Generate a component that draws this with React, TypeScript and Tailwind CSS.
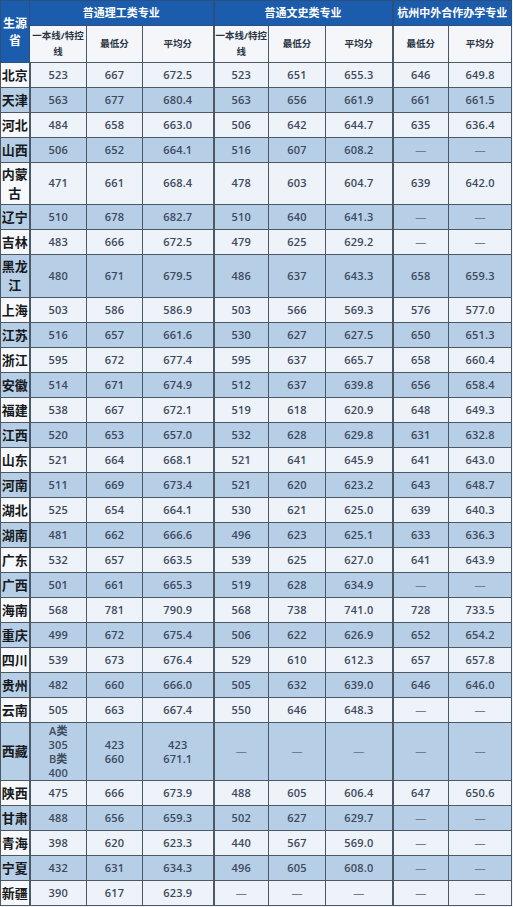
import React from "react";

type Row = { p: string[]; c: (string | string[])[]; h?: string };

const D = "—";

const rows: Row[] = [
  { p: ["北京"], c: ["523", "667", "672.5", "523", "651", "655.3", "646", "649.8"] },
  { p: ["天津"], c: ["563", "677", "680.4", "563", "656", "661.9", "661", "661.5"] },
  { p: ["河北"], c: ["484", "658", "663.0", "506", "642", "644.7", "635", "636.4"] },
  { p: ["山西"], c: ["506", "652", "664.1", "516", "607", "608.2", D, D] },
  { p: ["内蒙", "古"], c: ["471", "661", "668.4", "478", "603", "604.7", "639", "642.0"], h: "h-[42px]" },
  { p: ["辽宁"], c: ["510", "678", "682.7", "510", "640", "641.3", D, D] },
  { p: ["吉林"], c: ["483", "666", "672.5", "479", "625", "629.2", D, D] },
  { p: ["黑龙", "江"], c: ["480", "671", "679.5", "486", "637", "643.3", "658", "659.3"], h: "h-[43px]" },
  { p: ["上海"], c: ["503", "586", "586.9", "503", "566", "569.3", "576", "577.0"] },
  { p: ["江苏"], c: ["516", "657", "661.6", "530", "627", "627.5", "650", "651.3"] },
  { p: ["浙江"], c: ["595", "672", "677.4", "595", "637", "665.7", "658", "660.4"] },
  { p: ["安徽"], c: ["514", "671", "674.9", "512", "637", "639.8", "656", "658.4"] },
  { p: ["福建"], c: ["538", "667", "672.1", "519", "618", "620.9", "648", "649.3"] },
  { p: ["江西"], c: ["520", "653", "657.0", "532", "628", "629.8", "631", "632.8"] },
  { p: ["山东"], c: ["521", "664", "668.1", "521", "641", "645.9", "641", "643.0"] },
  { p: ["河南"], c: ["511", "669", "673.4", "521", "620", "623.2", "643", "648.7"] },
  { p: ["湖北"], c: ["525", "654", "664.1", "530", "621", "625.0", "639", "640.3"] },
  { p: ["湖南"], c: ["481", "662", "666.6", "496", "623", "625.1", "633", "636.3"] },
  { p: ["广东"], c: ["532", "657", "663.5", "539", "625", "627.0", "641", "643.9"] },
  { p: ["广西"], c: ["501", "661", "665.3", "519", "628", "634.9", D, D] },
  { p: ["海南"], c: ["568", "781", "790.9", "568", "738", "741.0", "728", "733.5"] },
  { p: ["重庆"], c: ["499", "672", "675.4", "506", "622", "626.9", "652", "654.2"] },
  { p: ["四川"], c: ["539", "673", "676.4", "529", "610", "612.3", "657", "657.8"] },
  { p: ["贵州"], c: ["482", "660", "666.0", "505", "632", "639.0", "646", "646.0"] },
  { p: ["云南"], c: ["505", "663", "667.4", "550", "646", "648.3", D, D] },
  { p: ["西藏"], c: [["A类", "305", "B类", "400"], ["423", "660"], ["423", "671.1"], D, D, D, D, D], h: "h-[58px]" },
  { p: ["陕西"], c: ["475", "666", "673.9", "488", "605", "606.4", "647", "650.6"] },
  { p: ["甘肃"], c: ["488", "656", "659.3", "502", "627", "629.7", D, D] },
  { p: ["青海"], c: ["398", "620", "623.3", "440", "567", "569.0", D, D] },
  { p: ["宁夏"], c: ["432", "631", "634.3", "496", "605", "608.0", D, D] },
  { p: ["新疆"], c: ["390", "617", "623.9", D, D, D, D, D] },
];

const font = { fontFamily: '"Open Sans", "Noto Sans CJK SC", sans-serif' };

function Cell({ v, idx }: { v: string | string[]; idx: number }) {
  const group = idx === 2 || idx === 5 ? "border-r-[2px]" : "";
  if (Array.isArray(v)) {
    return (
      <td className={`border border-[#4d5865] ${group} p-0 text-center align-middle text-[11px] font-semibold leading-[14px] tracking-[0.2px] text-[#3c4a5c]`}>
        {v.map((s, i) => (
          <div key={i}>{s}</div>
        ))}
      </td>
    );
  }
  return (
    <td
      className={`border border-[#4d5865] ${group} p-0 text-center align-middle text-[11px] font-semibold tracking-[0.2px] ${
        v === D ? "text-[#6f7d8d]" : "text-[#3c4a5c]"
      }`}
    >
      {v}
    </td>
  );
}

export default function App() {
  return (
    <div className="w-[513px] h-[907px] bg-[#f1f4f8] overflow-hidden" style={font}>
      <table className="w-[511px] table-fixed border-collapse">
        <colgroup>
          <col className="w-[29px]" />
          <col className="w-[57px]" />
          <col className="w-[56px]" />
          <col className="w-[71px]" />
          <col className="w-[55px]" />
          <col className="w-[57px]" />
          <col className="w-[67px]" />
          <col className="w-[56px]" />
          <col className="w-[63px]" />
        </colgroup>
        <thead>
          <tr className="h-[25px]">
            <th
              rowSpan={2}
              className="bg-[#1c5cad] border border-[#2b4f80] p-0 text-[12px] font-bold leading-[17px] text-white"
            >
              <div>生源</div>
              <div>省</div>
            </th>
            <th colSpan={3} className="bg-[#1c5cad] border border-[#2b4f80] border-r-[2px] p-0 text-[11px] font-bold text-white">
              普通理工类专业
            </th>
            <th colSpan={3} className="bg-[#1c5cad] border border-[#2b4f80] border-r-[2px] p-0 text-[11px] font-bold text-white">
              普通文史类专业
            </th>
            <th colSpan={2} className="bg-[#1c5cad] border border-[#2b4f80] p-0 text-[11px] font-bold text-white">
              杭州中外合作办学专业
            </th>
          </tr>
          <tr className="h-[37px] bg-[#f4f6fa]">
            {["一本线/特控线", "最低分", "平均分", "一本线/特控线", "最低分", "平均分", "最低分", "平均分"].map((t, i) => (
              <th
                key={i}
                className={`border border-[#4d5865] ${i === 2 || i === 5 ? "border-r-[2px]" : ""} p-0 text-[9.5px] font-bold leading-[16px] text-[#2a3442]`}
              >
                {t}
              </th>
            ))}
          </tr>
        </thead>
        <tbody>
          {rows.map((r, ri) => {
            const blue = ri % 2 === 1;
            return (
              <tr key={ri} className={`${r.h ?? "h-[25px]"} ${blue ? "bg-[#b7cee7]" : "bg-[#eef2f9]"}`}>
                <td
                  className={`border border-[#4d5865] border-r-[2px] p-0 text-center align-middle text-[13px] font-bold leading-[19px] text-[#161a20] ${
                    blue ? "bg-[#b7cee7]" : "bg-[#f6f8fb]"
                  }`}
                >
                  {r.p.map((s, i) => (
                    <div key={i}>{s}</div>
                  ))}
                </td>
                {r.c.map((v, ci) => (
                  <Cell key={ci} v={v} idx={ci} />
                ))}
              </tr>
            );
          })}
        </tbody>
      </table>
    </div>
  );
}
